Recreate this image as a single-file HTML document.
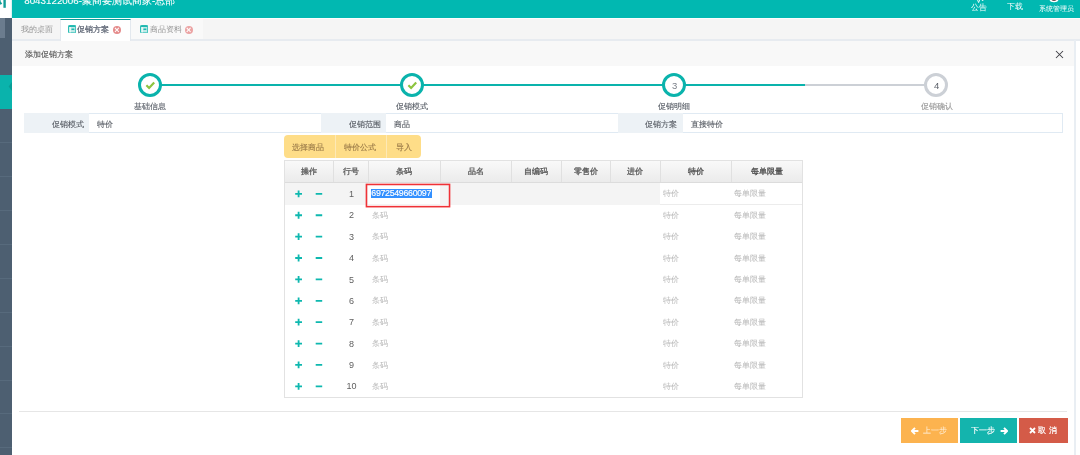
<!DOCTYPE html>
<html><head><meta charset="utf-8">
<style>
*{box-sizing:border-box;margin:0;padding:0}
html,body{width:1080px;height:455px;overflow:hidden;background:#fff;font-family:"Liberation Sans",sans-serif;}
.a{position:absolute}
.t{position:absolute;white-space:nowrap;line-height:1}
#side{left:0;top:18px;width:12px;height:437px;background:#4d5f71}
.sep{left:0;width:12px;height:1px;background:#576a7c}
#top{left:12px;top:0;width:1068px;height:18px;background:#01b8b1}
#tabs{left:12px;top:18px;width:1068px;height:23px;background:#f5f5f5;border-bottom:2px solid #e7ebf0}
.ring{position:absolute;width:24px;height:24px;border-radius:50%;border:3px solid #0ab3ac;background:#fff}
.lbl{position:absolute;font-size:8.4px;color:#575d66;-webkit-text-stroke:0.12px currentColor;text-align:center;width:60px;line-height:1}
.cell{position:absolute;top:113px;height:20px;background:#edf2f6}
.it{position:absolute;font-size:8.3px;color:#565b63;line-height:1;-webkit-text-stroke:0.12px currentColor}
th{font-weight:bold}
.hd{position:absolute;top:160.3px;height:22px;background:linear-gradient(#f9f9f9,#ececec);border-bottom:1px solid #dedede}
.hc{position:absolute;top:0;height:21px;padding-left:0.8px;font-size:8.3px;font-weight:normal;-webkit-text-stroke:0.28px currentColor;color:#585858;text-align:center;line-height:21px}
.row{position:absolute;left:284px;width:518px;height:21.5px}
.plus,.minus{position:absolute;background:#0ab3ac}
.num{position:absolute;font-size:9px;color:#606060;text-align:center;width:20px;line-height:1}
.ph{position:absolute;font-size:8.4px;color:#b6b6b6;line-height:1}
.btn{position:absolute;top:417.6px;height:24.8px;color:#fff;font-size:8.5px;line-height:24.8px;text-align:center}
</style></head><body>
<div id="root" style="position:absolute;left:0;top:0;width:1080px;height:455px;overflow:hidden;will-change:transform;background:#fff">
<!-- logo -->
<div class="a" style="left:0;top:0;width:12px;height:18px;background:#fff"></div>
<svg class="a" style="left:0;top:0" width="12" height="18" viewBox="0 0 12 18"><rect x="3.4" y="-1" width="2.4" height="8.8" fill="#139e98"/><path d="M-0.6 1.2 L1.3 4.3" stroke="#139e98" stroke-width="2.1"/><path d="M0.2 -0.6 L-0.6 0.6" stroke="#139e98" stroke-width="1.8"/><rect x="10.8" y="0" width="1.2" height="18" fill="#ddf2f2"/></svg>
<!-- sidebar -->
<div id="side" class="a"></div>
<div class="a" style="left:0;top:18px;width:5px;height:20px;background:#6b7c8e"></div>
<div class="a" style="left:0;top:75px;width:12px;height:34px;background:#0ab3ac"></div>
<svg class="a" style="left:8px;top:82px" width="4" height="9" viewBox="0 0 4 9"><path d="M4 0 L0.6 4.5 L4 9Z" fill="#089d96"/></svg>
<div class="sep a" style="top:142px"></div>
<div class="sep a" style="top:176px"></div>
<div class="sep a" style="top:210px"></div>
<div class="sep a" style="top:244px"></div>
<div class="sep a" style="top:278px"></div>
<div class="sep a" style="top:312px"></div>
<div class="sep a" style="top:346px"></div>
<div class="sep a" style="top:380px"></div>
<div class="sep a" style="top:413px"></div>
<div class="sep a" style="top:447px"></div>
<!-- topbar -->
<div id="top" class="a"></div>
<div class="t" style="left:24.2px;top:-4.5px;font-size:9.8px;color:#fff;-webkit-text-stroke:0.1px #fff">8043122006-聚商要测试商家-总部</div>
<svg class="a" style="left:975px;top:0" width="10" height="4" viewBox="0 0 10 4"><path d="M2.2 -1 L3.6 2.6 L5 -1" fill="none" stroke="#e8fbfa" stroke-width="1"/><circle cx="7.6" cy="0" r="0.9" fill="#e8fbfa"/></svg>
<svg class="a" style="left:1049px;top:-5px" width="10" height="8" viewBox="0 0 10 8"><ellipse cx="5" cy="3.8" rx="4.6" ry="3.4" fill="#fff"/><ellipse cx="5" cy="4" rx="2.6" ry="1.9" fill="#5e4a4a"/></svg>
<div class="t" style="left:971px;top:3.8px;font-size:7.5px;color:#fff">公告</div>
<div class="t" style="left:1007px;top:2.9px;font-size:7.5px;color:#fff">下载</div>
<div class="t" style="left:1039px;top:4.8px;font-size:7px;color:#fff">系统管理员</div>
<!-- tabs -->
<div id="tabs" class="a"></div>
<div class="a" style="left:12px;top:18px;width:1068px;height:1px;background:#fdfdfd"></div>
<div class="a" style="left:131px;top:19px;width:72.4px;height:20px;background:#f9f9f9"></div>
<div class="t" style="left:21px;top:25.7px;font-size:7.7px;color:#939393">我的桌面</div>
<div class="a" style="left:60px;top:19px;width:71px;height:22px;background:#fff;border-top:1.2px solid #0a9e98;border-left:1px solid #e3e8ee;border-right:1px solid #e3e8ee"></div>
<svg class="a" style="left:67.8px;top:24.5px" width="8.2" height="8.4" viewBox="0 0 8.2 8.4"><rect x="0.5" y="0.5" width="7.2" height="7.4" rx="0.8" fill="#bfeae7" stroke="#2bbdb5" stroke-width="1"/><rect x="0.6" y="0.6" width="7" height="1.4" fill="#1fb8b0"/><rect x="1.6" y="2" width="1.4" height="5.4" fill="#e4f7f6"/><rect x="3.3" y="3.4" width="3.2" height="1.5" rx="0.6" fill="#1fb8b0"/></svg>
<div class="t" style="left:77.4px;top:25.5px;font-size:8px;color:#596170;-webkit-text-stroke:0.22px #596170">促销方案</div>
<div class="a" style="left:112.7px;top:25.8px;width:8.6px;height:8.6px;border-radius:50%;background:#e58b8b"></div>
<div class="t" style="left:114.2px;top:25.5px;font-size:9px;color:#fff;font-weight:bold">×</div>
<svg class="a" style="left:139.8px;top:24.5px" width="8.2" height="8.4" viewBox="0 0 8.2 8.4"><rect x="0.5" y="0.5" width="7.2" height="7.4" rx="0.8" fill="#bfeae7" stroke="#2bbdb5" stroke-width="1"/><rect x="0.6" y="0.6" width="7" height="1.4" fill="#1fb8b0"/><rect x="1.6" y="2" width="1.4" height="5.4" fill="#e4f7f6"/><rect x="3.3" y="3.4" width="3.2" height="1.5" rx="0.6" fill="#1fb8b0"/></svg>
<div class="t" style="left:149.8px;top:25.5px;font-size:7.8px;color:#949494">商品资料</div>
<div class="a" style="left:184.6px;top:25.8px;width:8.6px;height:8.6px;border-radius:50%;background:#eba3a3"></div>
<div class="t" style="left:186.1px;top:25.5px;font-size:9px;color:#fff;font-weight:bold">×</div>
<!-- panel -->
<div class="a" style="left:12px;top:41px;width:1062px;height:25.3px;background:#f8f8f8"></div>
<div class="a" style="left:1074px;top:40px;width:2px;height:415px;background:#e9eef3"></div>
<div class="t" style="left:25px;top:50.3px;font-size:8.4px;color:#555;-webkit-text-stroke:0.12px #555">添加促销方案</div>
<svg class="a" style="left:1055px;top:50px" width="9" height="9" viewBox="0 0 9 9"><path d="M1 1 L8 8 M8 1 L1 8" stroke="#3f3f46" stroke-width="1.05" fill="none"/></svg>
<!-- steps -->
<div class="a" style="left:150px;top:83.5px;width:655px;height:2.5px;background:#0ab3ac"></div>
<div class="a" style="left:805px;top:83.5px;width:131px;height:2.5px;background:#ccd0d6"></div>
<div class="ring" style="left:138px;top:73.4px"></div>
<div class="ring" style="left:400px;top:73.4px"></div>
<div class="ring" style="left:662.4px;top:73.4px"></div>
<div class="ring" style="left:924.3px;top:73.4px;border-color:#ccd0d6"></div>
<svg class="a" style="left:138px;top:73.4px" width="24" height="24" viewBox="0 0 24 24"><path d="M8.4 12.3 L11.1 15 L16.2 9.6" fill="none" stroke="#8cc43f" stroke-width="2.2"/></svg>
<svg class="a" style="left:400px;top:73.4px" width="24" height="24" viewBox="0 0 24 24"><path d="M8.4 12.3 L11.1 15 L16.2 9.6" fill="none" stroke="#8cc43f" stroke-width="2.2"/></svg>
<div class="t" style="left:662.6px;top:80.8px;width:24px;text-align:center;font-size:9.5px;color:#7a7f88">3</div>
<div class="t" style="left:924.7px;top:80.8px;width:24px;text-align:center;font-size:9.5px;color:#5a5f68">4</div>
<div class="lbl" style="left:120px;top:101.5px">基础信息</div>
<div class="lbl" style="left:382px;top:101.5px">促销模式</div>
<div class="lbl" style="left:644.4px;top:101.5px">促销明细</div>
<div class="lbl" style="left:906.5px;top:101.5px;color:#999">促销确认</div>
<!-- info row -->
<div class="a" style="left:23.5px;top:113px;width:1039.5px;height:20px;border:1px solid #e0eaf3"></div>
<div class="cell" style="left:24px;width:65.4px"></div>
<div class="cell" style="left:321px;width:65px"></div>
<div class="cell" style="left:618px;width:65px"></div>
<div class="it" style="left:24px;width:59.9px;text-align:right;top:119.9px">促销模式</div>
<div class="it" style="left:96.9px;top:119.9px">特价</div>
<div class="it" style="left:321px;width:59.8px;text-align:right;top:119.9px">促销范围</div>
<div class="it" style="left:393.6px;top:119.9px">商品</div>
<div class="it" style="left:618px;width:59.4px;text-align:right;top:119.9px">促销方案</div>
<div class="it" style="left:690.6px;top:119.9px">直接特价</div>
<!-- button group -->
<div class="a" style="left:284px;top:135.3px;width:137.4px;height:22.5px;background:#fedd88;border-radius:4px"></div>
<div class="a" style="left:334.5px;top:135.3px;width:1px;height:22.5px;background:#fde9b6"></div>
<div class="a" style="left:386px;top:135.3px;width:1px;height:22.5px;background:#fde9b6"></div>
<div class="it" style="left:292.3px;top:143.5px;font-size:8.2px;color:#9a7a48">选择商品</div>
<div class="it" style="left:343.7px;top:143.5px;font-size:8.2px;color:#9a7a48">特价公式</div>
<div class="it" style="left:395.6px;top:143.5px;font-size:8.2px;color:#9a7a48">导入</div>
<!-- table -->
<div class="a" style="left:284px;top:160px;width:519px;height:238px;border:1px solid #e2e2e2;background:#fff"></div>
<div class="a" style="left:285px;top:161px;width:517px;height:22px;background:linear-gradient(#f9f9f9,#ebebeb);border-bottom:1px solid #dcdcdc"></div>
<div class="a" style="left:333px;top:161px;width:1px;height:21px;background:#e0e0e0"></div>
<div class="a" style="left:368px;top:161px;width:1px;height:21px;background:#e0e0e0"></div>
<div class="a" style="left:440px;top:161px;width:1px;height:21px;background:#e0e0e0"></div>
<div class="a" style="left:511px;top:161px;width:1px;height:21px;background:#e0e0e0"></div>
<div class="a" style="left:561px;top:161px;width:1px;height:21px;background:#e0e0e0"></div>
<div class="a" style="left:610px;top:161px;width:1px;height:21px;background:#e0e0e0"></div>
<div class="a" style="left:660px;top:161px;width:1px;height:21px;background:#e0e0e0"></div>
<div class="a" style="left:731px;top:161px;width:1px;height:21px;background:#e0e0e0"></div>
<div class="hc" style="left:284px;top:161px;width:49px">操作</div>
<div class="hc" style="left:333px;top:161px;width:35px">行号</div>
<div class="hc" style="left:368px;top:161px;width:72px">条码</div>
<div class="hc" style="left:440px;top:161px;width:71px">品名</div>
<div class="hc" style="left:511px;top:161px;width:50px">自编码</div>
<div class="hc" style="left:561px;top:161px;width:49px">零售价</div>
<div class="hc" style="left:610px;top:161px;width:50px">进价</div>
<div class="hc" style="left:660px;top:161px;width:71px;color:#4a4a4a">特价</div>
<div class="hc" style="left:731px;top:161px;width:71px;color:#4a4a4a">每单限量</div>
<div class="a" style="left:285px;top:183px;width:375px;height:22px;background:#f4f4f4"></div>
<div class="a" style="left:660px;top:204px;width:142px;height:1px;background:#ececec"></div>
<div class="a" style="left:368px;top:183px;width:72px;height:21px;background:#fff"></div>
<svg class="a" style="left:284px;top:183px" width="50" height="214" viewBox="284 183 50 214"><path d="M295.20 193.85h6.8M298.6 190.45v6.8M315.70 193.85h6.5" stroke="#0eb8af" stroke-width="1.8" fill="none"/><path d="M295.20 215.24h6.8M298.6 211.84v6.8M315.70 215.24h6.5" stroke="#0eb8af" stroke-width="1.8" fill="none"/><path d="M295.20 236.63h6.8M298.6 233.23v6.8M315.70 236.63h6.5" stroke="#0eb8af" stroke-width="1.8" fill="none"/><path d="M295.20 258.02h6.8M298.6 254.62v6.8M315.70 258.02h6.5" stroke="#0eb8af" stroke-width="1.8" fill="none"/><path d="M295.20 279.41h6.8M298.6 276.01v6.8M315.70 279.41h6.5" stroke="#0eb8af" stroke-width="1.8" fill="none"/><path d="M295.20 300.80h6.8M298.6 297.40v6.8M315.70 300.80h6.5" stroke="#0eb8af" stroke-width="1.8" fill="none"/><path d="M295.20 322.19h6.8M298.6 318.79v6.8M315.70 322.19h6.5" stroke="#0eb8af" stroke-width="1.8" fill="none"/><path d="M295.20 343.58h6.8M298.6 340.18v6.8M315.70 343.58h6.5" stroke="#0eb8af" stroke-width="1.8" fill="none"/><path d="M295.20 364.97h6.8M298.6 361.57v6.8M315.70 364.97h6.5" stroke="#0eb8af" stroke-width="1.8" fill="none"/><path d="M295.20 386.36h6.8M298.6 382.96v6.8M315.70 386.36h6.5" stroke="#0eb8af" stroke-width="1.8" fill="none"/></svg>
<div class="num" style="left:336.6px;width:30px;top:189.95px">1</div>
<div class="ph" style="left:662.7px;top:189.45px">特价</div>
<div class="ph" style="left:734px;top:189.45px">每单限量</div>
<div class="num" style="left:336.6px;width:30px;top:211.34px">2</div>
<div class="ph" style="left:371.5px;top:210.84px">条码</div>
<div class="ph" style="left:662.7px;top:210.84px">特价</div>
<div class="ph" style="left:734px;top:210.84px">每单限量</div>
<div class="num" style="left:336.6px;width:30px;top:232.73px">3</div>
<div class="ph" style="left:371.5px;top:232.23px">条码</div>
<div class="ph" style="left:662.7px;top:232.23px">特价</div>
<div class="ph" style="left:734px;top:232.23px">每单限量</div>
<div class="num" style="left:336.6px;width:30px;top:254.12px">4</div>
<div class="ph" style="left:371.5px;top:253.62px">条码</div>
<div class="ph" style="left:662.7px;top:253.62px">特价</div>
<div class="ph" style="left:734px;top:253.62px">每单限量</div>
<div class="num" style="left:336.6px;width:30px;top:275.51px">5</div>
<div class="ph" style="left:371.5px;top:275.01px">条码</div>
<div class="ph" style="left:662.7px;top:275.01px">特价</div>
<div class="ph" style="left:734px;top:275.01px">每单限量</div>
<div class="num" style="left:336.6px;width:30px;top:296.90px">6</div>
<div class="ph" style="left:371.5px;top:296.40px">条码</div>
<div class="ph" style="left:662.7px;top:296.40px">特价</div>
<div class="ph" style="left:734px;top:296.40px">每单限量</div>
<div class="num" style="left:336.6px;width:30px;top:318.29px">7</div>
<div class="ph" style="left:371.5px;top:317.79px">条码</div>
<div class="ph" style="left:662.7px;top:317.79px">特价</div>
<div class="ph" style="left:734px;top:317.79px">每单限量</div>
<div class="num" style="left:336.6px;width:30px;top:339.68px">8</div>
<div class="ph" style="left:371.5px;top:339.18px">条码</div>
<div class="ph" style="left:662.7px;top:339.18px">特价</div>
<div class="ph" style="left:734px;top:339.18px">每单限量</div>
<div class="num" style="left:336.6px;width:30px;top:361.07px">9</div>
<div class="ph" style="left:371.5px;top:360.57px">条码</div>
<div class="ph" style="left:662.7px;top:360.57px">特价</div>
<div class="ph" style="left:734px;top:360.57px">每单限量</div>
<div class="num" style="left:336.6px;width:30px;top:382.46px">10</div>
<div class="ph" style="left:371.5px;top:381.96px">条码</div>
<div class="ph" style="left:662.7px;top:381.96px">特价</div>
<div class="ph" style="left:734px;top:381.96px">每单限量</div>
<div class="a" style="left:371px;top:189px;width:61px;height:9px;background:#3390ff"></div>
<div class="t" style="left:371.3px;top:189.2px;font-size:8.8px;color:#fff;letter-spacing:-0.3px;-webkit-text-stroke:0.15px #fff">6972549660097</div>
<svg class="a" style="left:365px;top:183px" width="86" height="25" viewBox="0 0 86 25"><rect x="1.45" y="1.45" width="83.1" height="22.2" fill="none" stroke="#ef3237" stroke-width="1.6"/></svg>
<!-- footer -->
<div class="a" style="left:19px;top:411px;width:1048.4px;height:1px;background:#e6e6e6"></div>
<div class="btn" style="left:901px;top:418px;width:57px;height:24.6px;background:#fcb34f"></div>
<div class="btn" style="left:960px;top:418px;width:57px;height:24.6px;background:#14b4ad"></div>
<div class="btn" style="left:1019px;top:418px;width:48.5px;height:24.6px;background:#d45b48"></div>
<svg class="a" style="left:910.5px;top:426.5px" width="8" height="8" viewBox="0 0 8 8"><path d="M4 0.8 L0.9 4 L4 7.2 M1.2 4 H7.4" fill="none" stroke="#fff" stroke-width="1.9" stroke-linejoin="miter"/></svg>
<div class="t" style="left:922.8px;top:426.2px;font-size:8.3px;color:rgba(255,255,255,0.82)">上一步</div>
<div class="t" style="left:970.6px;top:426.2px;font-size:8.3px;color:#fff;-webkit-text-stroke:0.15px #fff">下一步</div>
<svg class="a" style="left:999.6px;top:426.5px" width="8" height="8" viewBox="0 0 8 8"><path d="M4 0.8 L7.1 4 L4 7.2 M6.8 4 H0.6" fill="none" stroke="#fff" stroke-width="1.9" stroke-linejoin="miter"/></svg>
<svg class="a" style="left:1029.4px;top:427.3px" width="7" height="7" viewBox="0 0 7 7"><path d="M1 1 L6 6 M6 1 L1 6" fill="none" stroke="#fff" stroke-width="1.8"/></svg>
<div class="t" style="left:1038.2px;top:426.2px;font-size:8.3px;color:#fff;letter-spacing:2.6px;-webkit-text-stroke:0.2px #fff">取消</div>
</div>
</body></html>
